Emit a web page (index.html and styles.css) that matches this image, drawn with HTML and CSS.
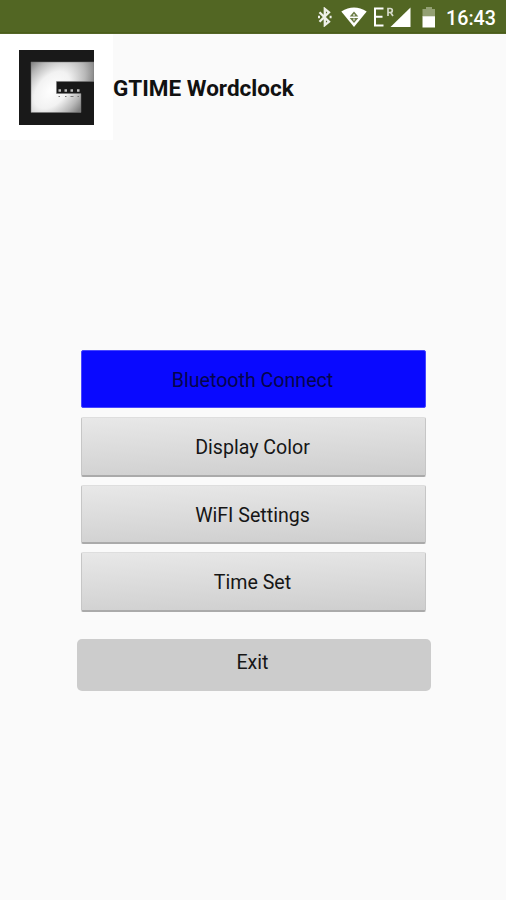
FILE: index.html
```html
<!DOCTYPE html>
<html lang="en">
<head>
<meta charset="utf-8">
<title>GTIME Wordclock</title>
<link rel="stylesheet" href="styles.css">
</head>
<body>
<header class="status">
  <svg class="bluetooth" width="16" height="20" viewBox="0 0 16 20" fill="none" stroke="currentColor" stroke-width="2.300"><path d="M2.500 5.200 12 14.600 7.800 18.100V1.900L12 5.400 2.500 14.800"/><path d="M1 10h2M12.600 10h2" stroke-width="2.400"/></svg>
  <svg class="wifi" width="26" height="20" viewBox="0 0 26 20"><path fill="currentColor" d="M.3 4.600Q13-3.800 25.700 4.600L13 20Z"/><path fill="#6c7c46" d="M13 4.400 17.300 9.500H8.700ZM8.700 11h8.600L13 16Z"/><path d="M13 7v2M13 11.500v2" stroke="#dce0d2" stroke-width="1.500"/></svg>
  <svg class="signal" width="38" height="20" viewBox="0 0 38 20"><path d="M10.500 1.500H2v17h8.500M2 9.700h7.500" fill="none" stroke="currentColor" stroke-width="2"/><path d="M15 9V1.500h2.300a2 2 0 0 1 0 4H15M17.600 5.500 20 9" fill="none" stroke="#d5dac9" stroke-width="1.700"/><path fill="currentColor" d="M37.500 .5V20H17.500Z"/></svg>
  <svg class="battery" width="14" height="21" viewBox="0 0 14 21"><path fill="#93a073" d="M4 0h6v2h3v8H.5V2H4z"/><path fill="currentColor" d="M.5 9.300h12.500V20.500H.5z"/></svg>
  <time class="clock">16:43</time>
</header>
<div class="brand">
  <div class="logo-box">
    <svg class="logo" width="75" height="75" viewBox="0 0 75 75">
      <defs>
        <radialGradient id="silver" gradientUnits="userSpaceOnUse" cx="0" cy="0" r="1" gradientTransform="translate(33 40) rotate(-48) scale(54 34)">
          <stop offset="0" stop-color="#fff"/><stop offset=".4" stop-color="#f2f2f2"/><stop offset=".75" stop-color="#b8b8b8"/><stop offset="1" stop-color="#808080"/>
        </radialGradient>
      </defs>
      <path fill="#191919" d="M0 0h75v75H0z"/>
      <path fill="url(#silver)" stroke="#777" stroke-width=".5" d="M12 12h63v19.500H37.500v12H62V62.500H12z"/>
      <path d="M39.500 40.500h2.500M45.500 40.500h2.500M51.500 40.500h2.500M58 40.500h2.500" stroke="#c0c0c0" stroke-width="2.600"/>
      <path d="M39.500 46.500h1.500M46 46.500h1.500M51.500 46.500h3M58.500 46.500h1.500" stroke="#777" stroke-width="1.200"/>
    </svg>
  </div>
  <h1 class="title">GTIME Wordclock</h1>
</div>
<main class="menu">
  <button class="item connect">Bluetooth Connect</button>
  <button class="item">Display Color</button>
  <button class="item">WiFI Settings</button>
  <button class="item">Time Set</button>
  <button class="exit">Exit</button>
</main>
</body>
</html>
```

FILE: styles.css
```css
body {
  margin: 0;
  min-height: 900px;
  background: #fafafa;
  color: #111;
  font-family: Roboto, "Liberation Sans", sans-serif;
}

.status {
  box-sizing: border-box;
  display: flex;
  height: 34px;
  padding: 7px 11px 0 0;
  justify-content: flex-end;
  background: linear-gradient(#526623 0 32px, #43560f 33px, #65753f 34px);
  color: #fff;
}

.bluetooth { margin-right: 8px; color: #eef0e9; }
.wifi { margin-right: 6px; }
.signal { margin-right: 11px; }
.battery { margin-right: 10px; }

.clock {
  width: 49px;
  font-size: 19.700px;
  font-weight: 500;
  line-height: 23px;
  white-space: nowrap;
}

.brand {
  display: flex;
  height: 106px;
}

.logo-box {
  box-sizing: border-box;
  width: 113px;
  height: 106px;
  padding: 16px 19px;
  background: #fff;
}

.logo { display: block; }

.title {
  margin: 0;
  font-size: 22.500px;
  font-weight: 700;
  line-height: 108px;
  white-space: nowrap;
}

.menu {
  display: flex;
  flex-direction: column;
  align-items: center;
  gap: 8px;
  padding: 210px 0 0 1px;
}

.item,
.exit {
  box-sizing: border-box;
  margin: 0;
  border: 0;
  color: #161616;
  font: 400 19.600px/24px Roboto, "Liberation Sans", sans-serif;
}

.item {
  width: 345px;
  height: 59.500px;
  padding: 4px 2px 0 0;
  border: 1px solid #c6c6c6;
  border-top-color: #dedede;
  border-bottom: 2px solid #aaa;
  border-radius: 2px;
  background: linear-gradient(178deg, #e8e8e8, #cecece);
}

.connect {
  height: 58px;
  margin-bottom: 1px;
  border: 1px solid #4747ff;
  background: #0909ff;
  color: #05054c;
}

.exit {
  width: 354px;
  height: 52px;
  margin-top: 19px;
  padding: 0 2px 4px 0;
  border-radius: 5px;
  background: #ccc;
}
```
